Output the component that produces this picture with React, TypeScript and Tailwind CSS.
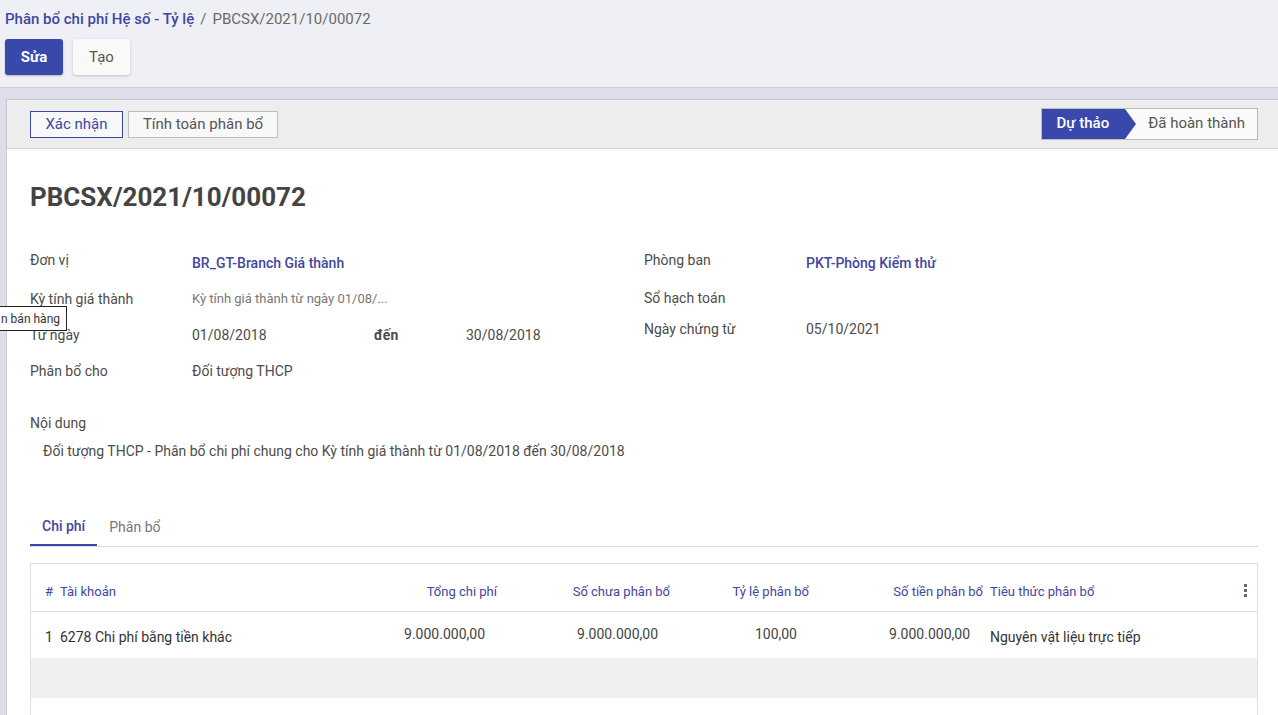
import React from 'react';

const blue = 'text-[#3f47a0]';

function Field({ label, children, h, labelOffset = '' }: { label: string; children?: React.ReactNode; h: string; labelOffset?: string }) {
  return (
    <div className={`flex items-center ${h}`}>
      <div className={`w-[162px] shrink-0 text-[14px] leading-[20px] text-[#4c4c4c] ${labelOffset}`}>{label}</div>
      <div className="flex-1 flex items-center">{children}</div>
    </div>
  );
}

export default function App() {
  return (
    <div className="relative w-[1278px] h-[715px] overflow-hidden bg-[#dddeea] font-['Roboto',sans-serif]">
      {/* control panel */}
      <div className="h-[88px] bg-[#eff0f5] border-b border-[#c9cad4] px-[5px] pt-[8px]">
        <div className="text-[15px] leading-[22px]">
          <span className={`${blue} font-medium`}>Phân bổ chi phí Hệ số - Tỷ lệ</span>
          <span className="text-[#6b6b6b] ml-[6px]">/</span>
          <span className="text-[#6b6b6b] ml-[6px]">PBCSX/2021/10/00072</span>
        </div>
        <div className="flex gap-[10px] mt-[9px]">
          <button className="h-[36px] w-[58px] rounded-[3px] bg-[#3949ab] text-white text-[15px] font-bold shadow-[0_1px_2px_rgba(0,0,0,0.25)]">Sửa</button>
          <button className="h-[36px] w-[57px] rounded-[3px] bg-[#f9f9f9] text-[#555] text-[15px] shadow-[0_1px_3px_rgba(0,0,0,0.2)]">Tạo</button>
        </div>
      </div>

      {/* sheet */}
      <div className="pl-[6px] pt-[11px]">
        <div className="bg-white border-l border-t border-[#c8c8c8] h-[640px]">
          <div className="h-[49px] bg-[#ededed] border-b border-[#d4d4d4] flex items-center justify-between pl-[23px] pr-[20px]">
            <div className="flex gap-[5px]">
              <button className={`h-[27px] w-[93px] border border-[#3949ab] bg-[#f8f8f8] text-[15px] ${blue}`}>Xác nhận</button>
              <button className="h-[27px] w-[150px] border border-[#bdbdbd] bg-[#f8f8f8] text-[15px] text-[#555]">Tính toán phân bổ</button>
            </div>
            <div className="flex h-[32px] border border-[#bdbdbd] bg-[#fafafa] mt-[-1px]">
              <div className="relative flex items-center bg-[#3949ab] pl-[15px] pr-[16px] text-white text-[15px] font-medium">
                Dự thảo
                <div className="absolute left-full top-0 w-0 h-0 border-y-[15px] border-y-transparent border-l-[11px] border-l-[#3949ab]" />
              </div>
              <div className="flex items-center pl-[23px] pr-[12px] text-[#555] text-[15px]">Đã hoàn thành</div>
            </div>
          </div>

          <div className="pl-[23px] pr-[20px]">
            <h1 className="pt-[32px] text-[26px] leading-[32px] font-bold text-[#444]">PBCSX/2021/10/00072</h1>

            <div className="flex mt-[31px]">
              <div className="w-[614px]">
                <Field label="Đơn vị" h="h-[37px]" labelOffset="mb-[6px]">
                  <span className={`text-[14px] font-medium ${blue} mt-[1px]`}>BR_GT-Branch Giá thành</span>
                </Field>
                <Field label="Kỳ tính giá thành" h="h-[36px]">
                  <span className="text-[13px] text-[#777]">Kỳ tính giá thành từ ngày 01/08/...</span>
                </Field>
                <Field label="Từ ngày" h="h-[36px]">
                  <span className="w-[182px] text-[14px] text-[#4c4c4c]">01/08/2018</span>
                  <span className="w-[92px] text-[14px] font-bold text-[#4c4c4c]">đến</span>
                  <span className="text-[14px] text-[#4c4c4c]">30/08/2018</span>
                </Field>
                <Field label="Phân bổ cho" h="h-[36px]">
                  <span className="text-[14px] text-[#4c4c4c]">Đối tượng THCP</span>
                </Field>
              </div>
              <div className="flex-1">
                <Field label="Phòng ban" h="h-[37px]" labelOffset="mb-[6px]">
                  <span className={`text-[14px] font-medium ${blue} mt-[1px]`}>PKT-Phòng Kiểm thử</span>
                </Field>
                <Field label="Sổ hạch toán" h="h-[34px]" />
                <Field label="Ngày chứng từ" h="h-[28px]">
                  <span className="text-[14px] text-[#4c4c4c]">05/10/2021</span>
                </Field>
              </div>
            </div>

            <div className="mt-[24px] text-[14px] leading-[20px] text-[#4c4c4c]">Nội dung</div>
            <div className="mt-[8px] pl-[13px] text-[14px] leading-[20px] text-[#4c4c4c]">
              Đối tượng THCP - Phân bổ chi phí chung cho Kỳ tính giá thành từ 01/08/2018 đến 30/08/2018
            </div>

            {/* tabs */}
            <div className="mt-[47px] flex border-b border-[#dcdcdc]">
              <div className={`h-[38px] px-[12px] flex items-center border-b-2 border-[#3949ab] text-[14px] font-medium ${blue} mb-[-1px]`}>Chi phí</div>
              <div className="h-[38px] px-[12px] flex items-center text-[14px] text-[#777]">Phân bổ</div>
            </div>

            {/* table */}
            <div className="mt-[16px] border-x border-t border-[#e0e0e0] text-[14px]">
              <div className="flex h-[48px] border-b border-[#e0e0e0] text-[13px] leading-[20px] text-[#3f47a0] pt-[18px]">
                <div className="w-[26px] pl-[14px]">#</div>
                <div className="w-[273px] pl-[3px]">Tài khoản</div>
                <div className="w-[170px] text-right pr-[3px]">Tổng chi phí</div>
                <div className="w-[173px] text-right pr-[3px]">Số chưa phân bổ</div>
                <div className="w-[139px] text-right pr-[3px]">Tỷ lệ phân bổ</div>
                <div className="w-[174px] text-right pr-[3px]">Số tiền phân bổ</div>
                <div className="flex-1 pl-[4px]">Tiêu thức phân bổ</div>
                <div className="w-[27px] flex flex-col items-center gap-[2px] pt-[2px] pl-[3px]">
                  <span className="w-[3px] h-[3px] bg-[#5f6b7a]" />
                  <span className="w-[3px] h-[3px] bg-[#5f6b7a]" />
                  <span className="w-[3px] h-[3px] bg-[#5f6b7a]" />
                </div>
              </div>
              <div className="flex h-[46px] leading-[20px] text-[#333]">
                <div className="w-[26px] pl-[14px] pt-[15px]">1</div>
                <div className="w-[273px] pl-[3px] pt-[15px]">6278 Chi phí bằng tiền khác</div>
                <div className="w-[170px] text-right pr-[15px] pt-[12px] text-[#444]">9.000.000,00</div>
                <div className="w-[173px] text-right pr-[15px] pt-[12px] text-[#444]">9.000.000,00</div>
                <div className="w-[139px] text-right pr-[15px] pt-[12px] text-[#444]">100,00</div>
                <div className="w-[174px] text-right pr-[16px] pt-[12px] text-[#444]">9.000.000,00</div>
                <div className="flex-1 pl-[4px] pt-[15px]">Nguyên vật liệu trực tiếp</div>
              </div>
              <div className="h-[40px] bg-[#f0f0f0]" />
              <div className="h-[40px]" />
            </div>
          </div>
        </div>
      </div>

      {/* tooltip */}
      <div className="absolute left-[-1px] top-[306px] h-[25px] w-[68px] border border-[#222] bg-white flex items-center justify-end pr-[6px] text-[12px] text-[#333] whitespace-nowrap overflow-hidden">
        n bán hàng
      </div>
    </div>
  );
}
